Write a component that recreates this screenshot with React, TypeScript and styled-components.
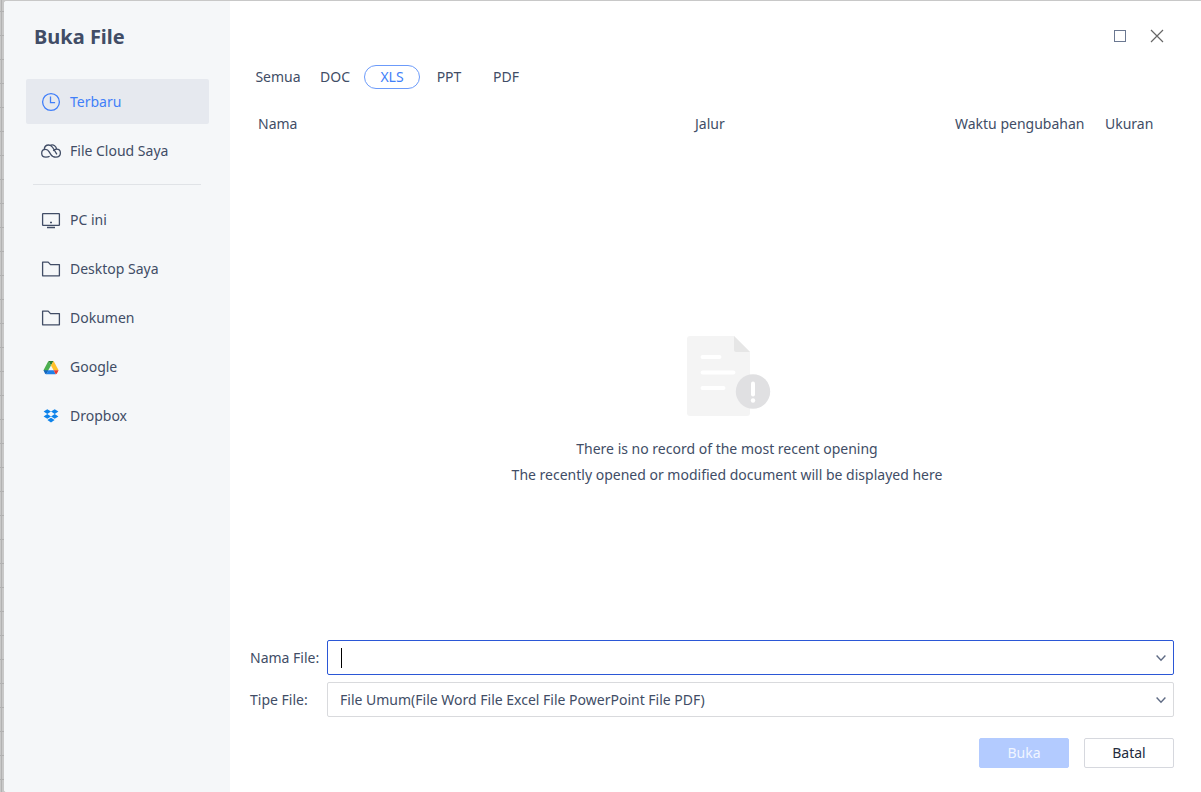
import React from "react";
import styled, { createGlobalStyle, css } from "styled-components";

const GlobalStyle = createGlobalStyle`
  *, *::before, *::after { box-sizing: border-box; }
  body { margin: 0; background: #c8c8c8; }
  body, button, input, select {
    font-family: "Noto Sans", "Open Sans", sans-serif;
    font-size: 14px;
    line-height: 20px;
    color: #414d66;
  }
  button, input, select { margin: 0; padding: 0; }
`;

const Backdrop = styled.div`
  min-height: 100vh;
  display: flex;
  padding: 1px 0 0 4px;
  background:
    linear-gradient(90deg, transparent 1px, #b2b2b2 1px 2px, transparent 2px) 0 0 / 4px 100% no-repeat,
    repeating-linear-gradient(#c8c8c8 0 11px, #b0b0b0 11px 12px, #c8c8c8 12px 24px);
`;

const Dialog = styled.div`
  flex: 1;
  display: flex;
  overflow: hidden;
  border-radius: 3px 0 0 3px;
  background: #fff;
`;

const Sidebar = styled.aside`
  flex: none;
  width: 226px;
  padding: 20px 21px 24px 22px;
  background: #f5f7f9;
`;

const Title = styled.h1`
  margin: 0 0 26px 8px;
  font-size: 20px;
  line-height: 32px;
  font-weight: 700;
`;

const NavList = styled.ul`
  display: flex;
  flex-direction: column;
  gap: 4px;
  margin: 0;
  padding: 0;
  list-style: none;
`;

const NavButton = styled.button<{ $active?: boolean }>`
  display: flex;
  align-items: center;
  gap: 8px;
  width: 100%;
  height: 45px;
  padding-left: 14px;
  border: 0;
  border-radius: 2px;
  background: ${(p) => (p.$active ? "#e6e9ef" : "transparent")};
  color: ${(p) => (p.$active ? "#417ff9" : "#414d66")};
  text-align: left;
  cursor: pointer;

  svg { flex: none; }
`;

const Divider = styled.hr`
  height: 1px;
  margin: 11px 8px 12px 7px;
  border: 0;
  background: #e0e3e7;
`;

const Main = styled.main`
  flex: 1;
  min-width: 0;
  display: flex;
  flex-direction: column;
  padding: 20px 27px 24px 20px;
`;

const WindowControls = styled.div`
  display: flex;
  justify-content: flex-end;
  gap: 7px;
  height: 30px;
  padding-right: 2px;
`;

const WindowButton = styled.button`
  display: grid;
  place-items: center;
  width: 30px;
  height: 30px;
  border: 0;
  background: none;
  cursor: pointer;
`;

const Tabs = styled.div`
  display: flex;
  gap: 1px;
  margin-top: 14px;
`;

const Tab = styled.button<{ $active?: boolean }>`
  width: 56px;
  height: 24px;
  border: 1px solid ${(p) => (p.$active ? "#6c9bfa" : "transparent")};
  border-radius: 12px;
  background: none;
  color: ${(p) => (p.$active ? "#417ff9" : "#414d66")};
  cursor: pointer;
`;

const FileTable = styled.table`
  width: 100%;
  margin-top: 23px;
  table-layout: fixed;
  border-collapse: collapse;
`;

const HeadCell = styled.th<{ $width?: number }>`
  width: ${(p) => (p.$width ? `${p.$width}px` : "auto")};
  height: 24px;
  padding: 0 0 0 8px;
  font-weight: 400;
  text-align: left;
  white-space: nowrap;
`;

const EmptyState = styled.section`
  flex: 1;
  display: flex;
  flex-direction: column;
  align-items: center;
  padding: 200px 0 24px 30px;

  svg { margin-bottom: 20px; }
  p { margin: 0; line-height: 26px; text-align: center; }
`;

const Form = styled.form`
  display: grid;
  grid-template-columns: 77px minmax(0, 1fr);
  row-gap: 7px;
  align-items: center;
`;

const fieldBox = css`
  height: 35px;
  border-radius: 2px;
  background: #fff;
`;

const ComboBox = styled.div`
  ${fieldBox}
  display: flex;
  align-items: center;
  padding-left: 13px;
  border: 1px solid #2b57d6;
`;

const Caret = styled.span`
  width: 1px;
  height: 20px;
  background: #000;
`;

const TextInput = styled.input`
  flex: 1;
  min-width: 0;
  height: 100%;
  border: 0;
  outline: 0;
  background: transparent;
`;

const DropButton = styled.button`
  display: grid;
  place-items: center;
  width: 24px;
  height: 100%;
  border: 0;
  background: none;
`;

const SelectWrap = styled.div`
  display: grid;
  align-items: center;

  > * { grid-area: 1 / 1; }
  > svg { justify-self: end; margin-right: 8px; pointer-events: none; }
`;

const Select = styled.select`
  ${fieldBox}
  width: 100%;
  padding: 0 32px 0 12px;
  border: 1px solid #d9dadd;
  appearance: none;
`;

const Actions = styled.div`
  grid-column: 1 / -1;
  display: flex;
  justify-content: flex-end;
  gap: 15px;
  margin-top: 14px;
`;

const ActionButton = styled.button<{ $primary?: boolean }>`
  width: 90px;
  height: 30px;
  border: 1px solid ${(p) => (p.$primary ? "#b3cbff" : "#d6d8de")};
  border-radius: 2px;
  background: ${(p) => (p.$primary ? "#b3cbff" : "#fff")};
  color: ${(p) => (p.$primary ? "#f0f5ff" : "#232b3d")};
`;

const Chevron = () => (
  <svg width="10" height="9" viewBox="0 0 10 9" fill="none" stroke="#5f6b84" strokeWidth="1.4" aria-hidden="true">
    <path d="M.6 2.600 5 7.300 9.400 2.600" />
  </svg>
);

const icon = { width: 22, height: 22, viewBox: "0 0 22 22", fill: "none", "aria-hidden": true } as const;
const stroke = { stroke: "currentColor", strokeWidth: 1.3 } as const;

const ClockIcon = () => (
  <svg {...icon} {...stroke}>
    <circle cx="11" cy="11" r="8.4" />
    <path d="M10.5 5.6v6h4.6" />
  </svg>
);

const CloudIcon = () => (
  <svg {...icon} {...stroke}>
    <path d="M9.600 16.200C8.700 16.900 7.500 17.100 5.900 17.100 3.400 17.100 1.700 15.500 1.700 13.200 1.700 11 3.400 9.400 5.600 9.400 7.300 9.400 8.300 10.300 9.200 11.800L10.900 14.600C12 16.400 13.300 17.100 15.900 17.100 18.600 17.100 20.400 15.500 20.400 13 20.400 10.800 18.700 9.200 16.500 9.200 15 9.200 14 9.900 13.300 11" />
    <path d="M4.200 9.500C4.400 6.900 6.300 5 8.700 5 10.600 5 11.700 5.900 12.700 7.500L16.900 14.400" />
    <path d="M10.600 5.200C13.600 4.100 16.300 6.200 16.600 9.200" />
  </svg>
);

const PcIcon = () => (
  <svg {...icon} {...stroke}>
    <rect x="2.600" y="4.600" width="16.800" height="11.800" rx=".5" />
    <path d="M7 18.500h8M10 13.500h2" />
  </svg>
);

const FolderIcon = () => (
  <svg {...icon} {...stroke}>
    <path d="M2.600 17.400V4.100h5.600l2.300 2.500h8.900v11.200H2.600z" strokeLinejoin="round" />
  </svg>
);

const DriveIcon = () => (
  <svg {...icon}>
    <path d="M8.400 5h5.200L11 9.600z" fill="#2e7d32" />
    <path d="M8.400 5 11 9.600 6.300 17.700 3.500 14.200z" fill="#4caf50" />
    <path d="M13.600 5 18.600 14.200h-5L11 9.600z" fill="#ffc129" />
    <path d="M3.500 14.200h5L6.300 18.200Q5.400 18.200 5 17.400z" fill="#1565c0" />
    <path d="M8.400 14.200h5.200l2.200 4H6.200z" fill="#1e80e8" />
    <path d="M13.600 14.200h5L16.900 17.400Q16.500 18 15.800 18.200z" fill="#ea3b2e" />
  </svg>
);

const DropboxIcon = () => (
  <svg {...icon} fill="#0e83ea">
    <path d="M7.300 4.200 11 6.600 7.300 9 3.600 6.600zM14.700 4.200 18.400 6.600 14.700 9 11 6.600zM7.300 9 11 11.400 7.300 13.800 3.600 11.400zM14.700 9 18.400 11.400 14.700 13.800 11 11.400zM11 12.700 14.600 15.100 11 17.500 7.400 15.100z" />
  </svg>
);

const EmptyIcon = () => (
  <svg width="88" height="80" viewBox="-4 0 88 80" aria-hidden="true">
    <path d="M3 0h44l16 16v61q0 3-3 3H3q-3 0-3-3V3q0-3 3-3z" fill="#f4f4f4" />
    <path d="M47 0 63 16H49q-2 0-2-2z" fill="#e6e6e6" />
    <path d="M15.500 21h17M15.500 36.500h31M15.500 52h21" stroke="#fff" strokeWidth="4" strokeLinecap="round" />
    <circle cx="66" cy="55.500" r="17.200" fill="#e0e0e2" />
    <path d="M66 47.500v11" stroke="#fff" strokeWidth="4" strokeLinecap="round" />
    <circle cx="66" cy="64.500" r="2.200" fill="#fff" />
  </svg>
);

const recent = [
  { label: "Terbaru", Icon: ClockIcon, active: true },
  { label: "File Cloud Saya", Icon: CloudIcon },
];

const places = [
  { label: "PC ini", Icon: PcIcon },
  { label: "Desktop Saya", Icon: FolderIcon },
  { label: "Dokumen", Icon: FolderIcon },
  { label: "Google", Icon: DriveIcon },
  { label: "Dropbox", Icon: DropboxIcon },
];

type NavEntry = { label: string; Icon: () => React.JSX.Element; active?: boolean };

const Nav = ({ items }: { items: NavEntry[] }) => (
  <NavList>
    {items.map(({ label, Icon, active }) => (
      <li key={label}>
        <NavButton type="button" $active={active}>
          <Icon />
          {label}
        </NavButton>
      </li>
    ))}
  </NavList>
);

export default function App() {
  return (
    <>
      <GlobalStyle />
      <Backdrop>
        <Dialog role="dialog" aria-labelledby="title">
          <Sidebar>
            <Title id="title">Buka File</Title>
            <nav>
              <Nav items={recent} />
              <Divider />
              <Nav items={places} />
            </nav>
          </Sidebar>
          <Main>
            <WindowControls>
              <WindowButton type="button" aria-label="Maksimalkan">
                <svg width="14" height="14" viewBox="0 0 14 14" fill="none" stroke="#6b7891" aria-hidden="true">
                  <rect x="1.500" y="1.500" width="11" height="11" />
                </svg>
              </WindowButton>
              <WindowButton type="button" aria-label="Tutup">
                <svg width="14" height="14" viewBox="0 0 14 14" stroke="#666" strokeWidth="1.200" aria-hidden="true">
                  <path d="M1 1 13 13M13 1 1 13" />
                </svg>
              </WindowButton>
            </WindowControls>
            <Tabs role="tablist">
              {["Semua", "DOC", "XLS", "PPT", "PDF"].map((t) => (
                <Tab key={t} type="button" role="tab" aria-selected={t === "XLS"} $active={t === "XLS"}>
                  {t}
                </Tab>
              ))}
            </Tabs>
            <FileTable>
              <thead>
                <tr>
                  <HeadCell>Nama</HeadCell>
                  <HeadCell $width={260}>Jalur</HeadCell>
                  <HeadCell $width={150}>Waktu pengubahan</HeadCell>
                  <HeadCell $width={77}>Ukuran</HeadCell>
                </tr>
              </thead>
            </FileTable>
            <EmptyState>
              <EmptyIcon />
              <p>There is no record of the most recent opening</p>
              <p>The recently opened or modified document will be displayed here</p>
            </EmptyState>
            <Form onSubmit={(e) => e.preventDefault()}>
              <label htmlFor="file-name">Nama File:</label>
              <ComboBox>
                <Caret />
                <TextInput id="file-name" type="text" autoComplete="off" />
                <DropButton type="button" aria-label="Riwayat nama file">
                  <Chevron />
                </DropButton>
              </ComboBox>
              <label htmlFor="file-type">Tipe File:</label>
              <SelectWrap>
                <Select id="file-type">
                  <option>File Umum(File Word File Excel File PowerPoint File PDF)</option>
                </Select>
                <Chevron />
              </SelectWrap>
              <Actions>
                <ActionButton type="submit" $primary disabled>
                  Buka
                </ActionButton>
                <ActionButton type="button">Batal</ActionButton>
              </Actions>
            </Form>
          </Main>
        </Dialog>
      </Backdrop>
    </>
  );
}
